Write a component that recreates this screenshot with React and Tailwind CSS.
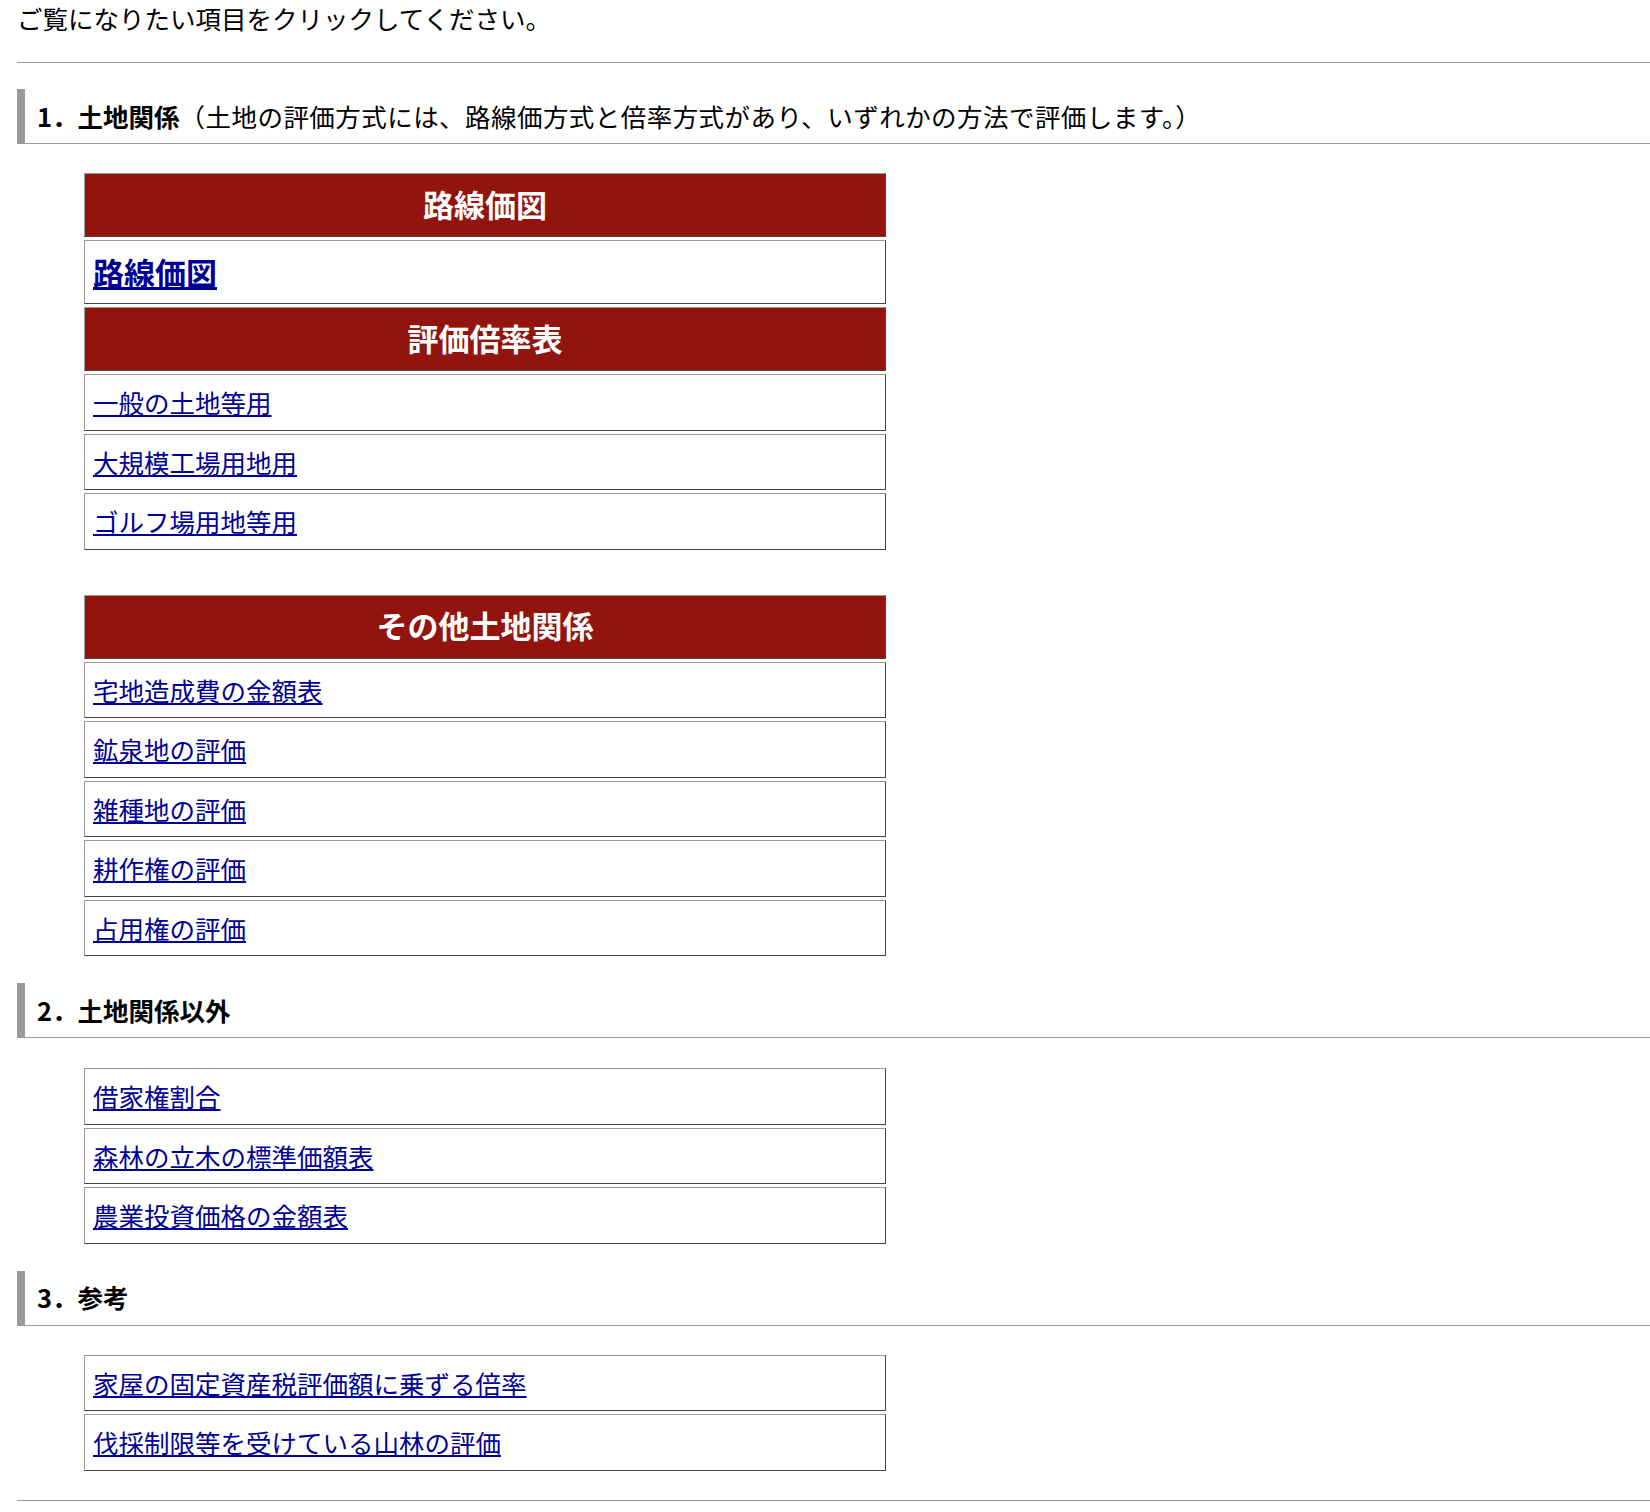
import React from "react";

const cellBorder =
  "border border-t-[#9a9a9a] border-l-[#9a9a9a] border-r-[#444] border-b-[#444]";

function Header({ children }) {
  return (
    <div
      className={`flex h-[64px] items-center justify-center bg-[#92140e] pb-[2px] text-[31px] font-bold text-white ${cellBorder}`}
    >
      {children}
    </div>
  );
}

function Row({ children, big }) {
  return (
    <div className={`flex items-center pl-[8px] ${big ? "h-[64px]" : "h-[56.5px]"} ${cellBorder}`}>
      <a
        href="#"
        className={`text-[#000099] underline ${big ? "text-[31px] font-bold" : "text-[25.5px]"}`}
      >
        {children}
      </a>
    </div>
  );
}

function Table({ children, className = "" }) {
  return <div className={`ml-[67px] flex w-[802px] flex-col gap-[3px] ${className}`}>{children}</div>;
}

function Heading({ num, title, note, className = "" }) {
  return (
    <div
      className={`flex h-[55px] items-center border-b border-l-[8px] border-b-[#9a9a9a] border-l-[#9a9a9a] pl-[12px] text-[25.5px] text-black ${className}`}
    >
      <span className="font-bold">
        {num}．{title}
      </span>
      {note && <span className="tracking-[0.45px]">{note}</span>}
    </div>
  );
}

export default function App() {
  return (
    <div className="min-h-[1512px] bg-white pl-[17px] text-black [font-family:'Noto_Sans_CJK_JP','Liberation_Sans',sans-serif]">
      <div className="h-[38px] text-[25.5px] leading-[36px]">
        ご覧になりたい項目をクリックしてください。
      </div>
      <div className="mt-[24px] h-px bg-[#9a9a9a]" />

      <Heading
        className="mt-[26px]"
        num="1"
        title="土地関係"
        note="（土地の評価方式には、路線価方式と倍率方式があり、いずれかの方法で評価します。）"
      />

      <Table className="mt-[29px]">
        <Header>路線価図</Header>
        <Row big>路線価図</Row>
        <Header>評価倍率表</Header>
        <Row>一般の土地等用</Row>
        <Row>大規模工場用地用</Row>
        <Row>ゴルフ場用地等用</Row>
      </Table>

      <Table className="mt-[45px]">
        <Header>その他土地関係</Header>
        <Row>宅地造成費の金額表</Row>
        <Row>鉱泉地の評価</Row>
        <Row>雑種地の評価</Row>
        <Row>耕作権の評価</Row>
        <Row>占用権の評価</Row>
      </Table>

      <Heading className="mt-[27px]" num="2" title="土地関係以外" />

      <Table className="mt-[30px]">
        <Row>借家権割合</Row>
        <Row>森林の立木の標準価額表</Row>
        <Row>農業投資価格の金額表</Row>
      </Table>

      <Heading className="mt-[27px]" num="3" title="参考" />

      <Table className="mt-[29px]">
        <Row>家屋の固定資産税評価額に乗ずる倍率</Row>
        <Row>伐採制限等を受けている山林の評価</Row>
      </Table>

      <div className="mt-[29px] h-px bg-[#9a9a9a]" />
    </div>
  );
}
